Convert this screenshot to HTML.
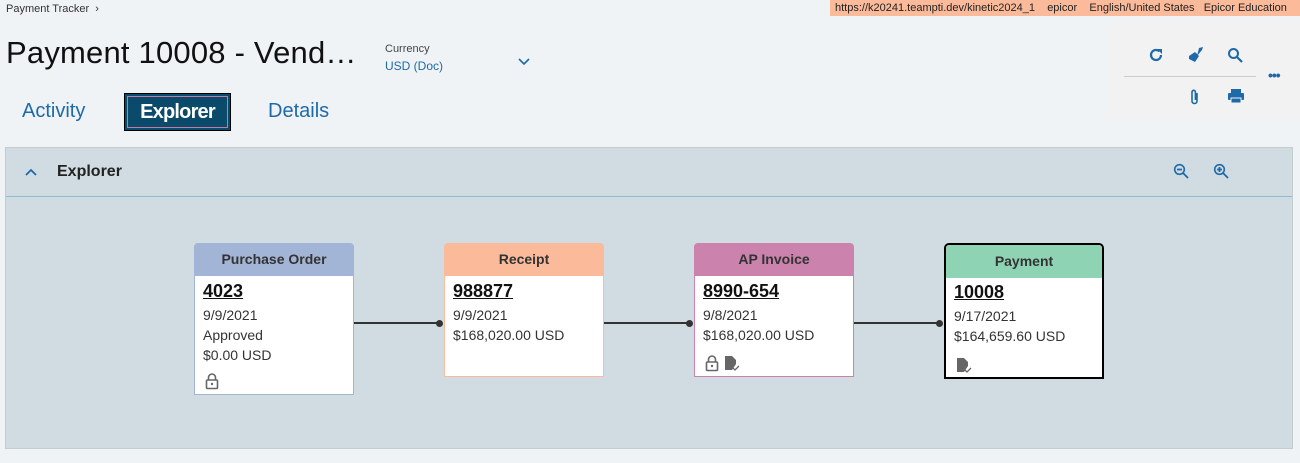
<!DOCTYPE html>
<html><head><style>
*{margin:0;padding:0;box-sizing:border-box}
body{width:1300px;height:463px;background:#eff3f6;font-family:"Liberation Sans",sans-serif;position:relative;overflow:hidden;color:#222}
.a{position:absolute}
.card{position:absolute;background:#fff;width:160px;border-radius:5px 5px 0 0}
.card .h{height:33px;text-align:center;font-weight:bold;font-size:14px;line-height:33px;color:#333;border-radius:4px 4px 0 0}
.card .b{padding:3px 8px;font-size:14px;color:#333;line-height:20px}
.card .n{font-weight:bold;font-size:18px;text-decoration:underline;color:#111;line-height:24px;margin-bottom:2px}
.ln{position:absolute;height:2px;background:#333;top:322px}
.dot{position:absolute;width:7px;height:7px;border-radius:50%;background:#333;top:320px}
.ic{position:absolute;color:#1e6aa8}
</style></head><body>
<div class="a" style="left:6px;top:3px;font-size:11px;color:#333">Payment Tracker &nbsp;›</div>
<div class="a" style="left:830px;top:0;width:470px;height:16px;background:#fbbb9b;font-size:11px;line-height:16px;padding-left:5px;color:#222;white-space:nowrap">https://k20241.teampti.dev/kinetic2024_1 &nbsp;&nbsp; epicor &nbsp;&nbsp; English/United States &nbsp;&nbsp;Epicor Education</div>
<div class="a" style="left:6px;top:35px;font-size:31px;letter-spacing:0.2px;color:#111">Payment 10008 - Vend…</div>
<div class="a" style="left:385px;top:43px;font-size:11px;color:#444">Currency</div>
<div class="a" style="left:385px;top:59px;font-size:12px;color:#1e6aa8">USD (Doc)</div>
<svg class="a" style="left:518px;top:58px" width="12" height="8"><path d="M1 1l5 5 5-5" stroke="#1e6aa8" stroke-width="1.6" fill="none"/></svg>
<div class="a" style="left:1108px;top:20px;width:192px;height:100px;background:#f2f2f2"></div>
<div class="a" style="left:1124px;top:76px;width:132px;height:1px;background:#ccc"></div>
<svg class="ic" style="left:1148px;top:47px" width="16" height="16"><path d="M13 8a5 5 0 1 1-1.5-3.6" stroke="#1e6aa8" stroke-width="2.2" fill="none"/><path d="M9 2h5v5z" fill="#1e6aa8"/></svg>
<svg class="ic" style="left:1187px;top:46px" width="18" height="18"><path d="M12 2l4-1-1 3-5 6z" fill="#1e6aa8"/><path d="M2 10l6-4 4 4-4 6-6-3z" fill="#1e6aa8"/></svg>
<svg class="ic" style="left:1227px;top:47px" width="17" height="17"><circle cx="6.5" cy="6.5" r="4.5" stroke="#1e6aa8" stroke-width="2" fill="none"/><path d="M10 10l5 5" stroke="#1e6aa8" stroke-width="2.2"/></svg>
<div class="a" style="left:1268px;top:67px;font-size:14px;font-weight:bold;color:#1e6aa8;letter-spacing:-1px">•••</div>
<svg class="ic" style="left:1189px;top:88px" width="12" height="18"><path d="M8 5v8a2.5 2.5 0 0 1-5 0V4a1.7 1.7 0 0 1 3.4 0v8" stroke="#1e6aa8" stroke-width="1.6" fill="none"/></svg>
<svg class="ic" style="left:1227px;top:88px" width="18" height="16"><rect x="4" y="1" width="10" height="4" fill="#1e6aa8"/><rect x="1" y="5" width="16" height="7" rx="1" fill="#1e6aa8"/><rect x="4" y="10" width="10" height="5" fill="#1e6aa8" stroke="#f2f2f2" stroke-width="1"/></svg>
<div class="a" style="left:22px;top:100px;font-size:20px;color:#1e6aa8">Activity</div>
<div class="a" style="left:124px;top:93px;width:107px;height:38px;background:#0a4a6a;border:1px solid #000"><div style="margin:2px;height:32px;border:1px solid #c37aa5;color:#fff;font-weight:bold;font-size:20px;text-align:center;line-height:30px;letter-spacing:-0.8px">Explorer</div></div>
<div class="a" style="left:268px;top:100px;font-size:20px;color:#1e6aa8">Details</div>
<div class="a" style="left:5px;top:147px;width:1288px;height:302px;background:#d0dce2;border:1px solid #c4ccd0"></div>
<div class="a" style="left:6px;top:196px;width:1286px;height:1px;background:#8fbdd0"></div>
<svg class="a" style="left:25px;top:168px" width="12" height="8"><path d="M1 7l5-5 5 5" stroke="#1e6aa8" stroke-width="1.8" fill="none"/></svg>
<div class="a" style="left:57px;top:163px;font-size:16px;font-weight:bold;color:#222">Explorer</div>
<svg class="ic" style="left:1173px;top:163px" width="16" height="16"><circle cx="6.5" cy="6.5" r="4.8" stroke="#1e6aa8" stroke-width="1.6" fill="none"/><path d="M4 6.5h5M10 10l5 5" stroke="#1e6aa8" stroke-width="1.8"/></svg>
<svg class="ic" style="left:1213px;top:163px" width="16" height="16"><circle cx="6.5" cy="6.5" r="4.8" stroke="#1e6aa8" stroke-width="1.6" fill="none"/><path d="M4 6.5h5M6.5 4v5M10 10l5 5" stroke="#1e6aa8" stroke-width="1.8"/></svg>

<div class="ln" style="left:354px;width:86px"></div><div class="dot" style="left:436px"></div>
<div class="ln" style="left:604px;width:86px"></div><div class="dot" style="left:686px"></div>
<div class="ln" style="left:854px;width:86px"></div><div class="dot" style="left:936px"></div>

<div class="card" style="left:194px;top:243px;height:152px;border:1px solid #a2b5d6">
<div class="h" style="background:#a2b5d6;margin:-1px -1px 0">Purchase Order</div>
<div class="b"><div class="n">4023</div>9/9/2021<br>Approved<br>$0.00 USD</div>
<svg class="a" style="left:10px;top:129px" width="14" height="17"><path d="M3.5 7V4.5a3.5 3.5 0 0 1 7 0V7" stroke="#666" stroke-width="1.6" fill="none"/><rect x="1.5" y="7" width="11" height="8.5" rx="1" stroke="#666" stroke-width="1.6" fill="none"/><circle cx="7" cy="11" r="1.2" fill="#666"/></svg>
</div>
<div class="card" style="left:444px;top:243px;height:134px;border:1px solid #fbbb9b">
<div class="h" style="background:#fbbb9b;margin:-1px -1px 0">Receipt</div>
<div class="b"><div class="n">988877</div>9/9/2021<br>$168,020.00 USD</div>
</div>
<div class="card" style="left:694px;top:243px;height:134px;border:1px solid #cb82ad">
<div class="h" style="background:#cb82ad;margin:-1px -1px 0">AP Invoice</div>
<div class="b"><div class="n">8990-654</div>9/8/2021<br>$168,020.00 USD</div>
<svg class="a" style="left:10px;top:111px" width="14" height="17"><path d="M3.5 7V4.5a3.5 3.5 0 0 1 7 0V7" stroke="#666" stroke-width="1.6" fill="none"/><rect x="1.5" y="7" width="11" height="8.5" rx="1" stroke="#666" stroke-width="1.6" fill="none"/><circle cx="7" cy="11" r="1.2" fill="#666"/></svg>
<svg class="a" style="left:29px;top:111px" width="16" height="17"><path d="M1 1h7l4 4v4l-4 6H1z" fill="#666"/><path d="M9 13l2 2 4-4" stroke="#666" stroke-width="1.3" fill="none"/></svg>
</div>
<div class="card" style="left:944px;top:243px;height:136px;border:2px solid #000">
<div class="h" style="background:#8fd3b5;margin:0">Payment</div>
<div class="b" style="padding-top:2px"><div class="n">10008</div>9/17/2021<br>$164,659.60 USD</div>
<svg class="a" style="left:10px;top:112px" width="16" height="17"><path d="M1 1h7l4 4v4l-4 6H1z" fill="#666"/><path d="M9 13l2 2 4-4" stroke="#666" stroke-width="1.3" fill="none"/></svg>
</div>
</body></html>
